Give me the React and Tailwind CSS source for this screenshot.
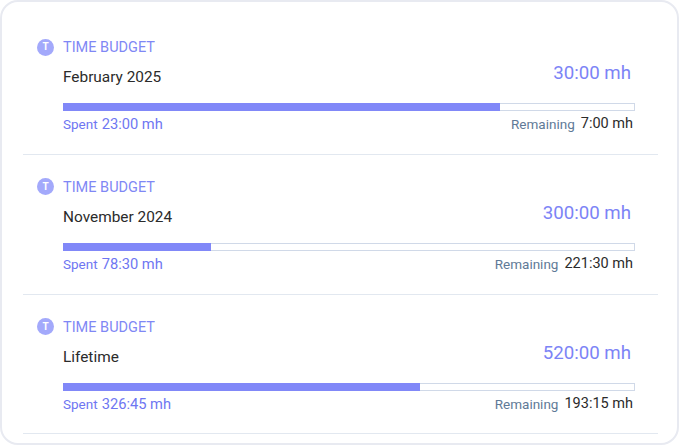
const budgets = [
  { period: 'February 2025', total: '30:00 mh', spent: '23:00 mh', remaining: '7:00 mh', pct: 76.7 },
  { period: 'November 2024', total: '300:00 mh', spent: '78:30 mh', remaining: '221:30 mh', pct: 26 },
  { period: 'Lifetime', total: '520:00 mh', spent: '326:45 mh', remaining: '193:15 mh', pct: 62.7 },
];

function BudgetRow({ budget }) {
  return (
    <div className="h-[139.8px] border-b border-[#e2e8f0] pl-[15px] pr-[23px] pt-[24px]">
      <div className="flex h-[18px] items-center gap-[9px]">
        <span className="-ml-px mb-[2px] flex h-[17px] w-[17px] items-center justify-center rounded-full bg-[#a3a9fb] text-[10px] font-bold leading-none text-white">T</span>
        <span className="text-[14.5px] leading-[18px] text-[#7f87f5]">TIME BUDGET</span>
      </div>
      <div className="mt-[10px] flex items-start justify-between pl-[25px] pr-[4px]">
        <span className="text-[15.4px] leading-5 text-[#2b2b2b]">{budget.period}</span>
        <span className="-mt-[6px] text-[18.7px] leading-6 text-[#7c84f6]">{budget.total}</span>
      </div>
      <div className="ml-[25px] mt-[16px] h-2 w-[572px] border border-[#d0d9e8] bg-white">
        <div className="-m-px h-2 bg-[#8188f8]" style={{ width: `${budget.pct}%` }} />
      </div>
      <div className="ml-[25px] mt-[3px] flex w-[570px] items-center justify-between">
        <div className="flex items-center gap-[4px] text-[#6e76f2]">
          <span className="text-[13.5px] leading-[20px]">Spent</span>
          <span className="text-[14.7px] leading-[20px]">{budget.spent}</span>
        </div>
        <div className="flex items-center gap-[6px]">
          <span className="text-[13.5px] leading-[20px] text-[#5f7a97]">Remaining</span>
          <span className="text-[14.5px] leading-[20px] text-[#2b2b2b]">{budget.remaining}</span>
        </div>
      </div>
    </div>
  );
}

export default function App() {
  return (
    <div className="h-[446px] w-[680px] bg-white font-['Roboto',sans-serif]">
      <div className="h-[445px] w-[679px] rounded-[18px] border-2 border-[#e8eaf1] bg-white pl-[21px] pr-[19px] pt-[13px]">
        {budgets.map((budget) => (
          <BudgetRow key={budget.period} budget={budget} />
        ))}
      </div>
    </div>
  );
}
